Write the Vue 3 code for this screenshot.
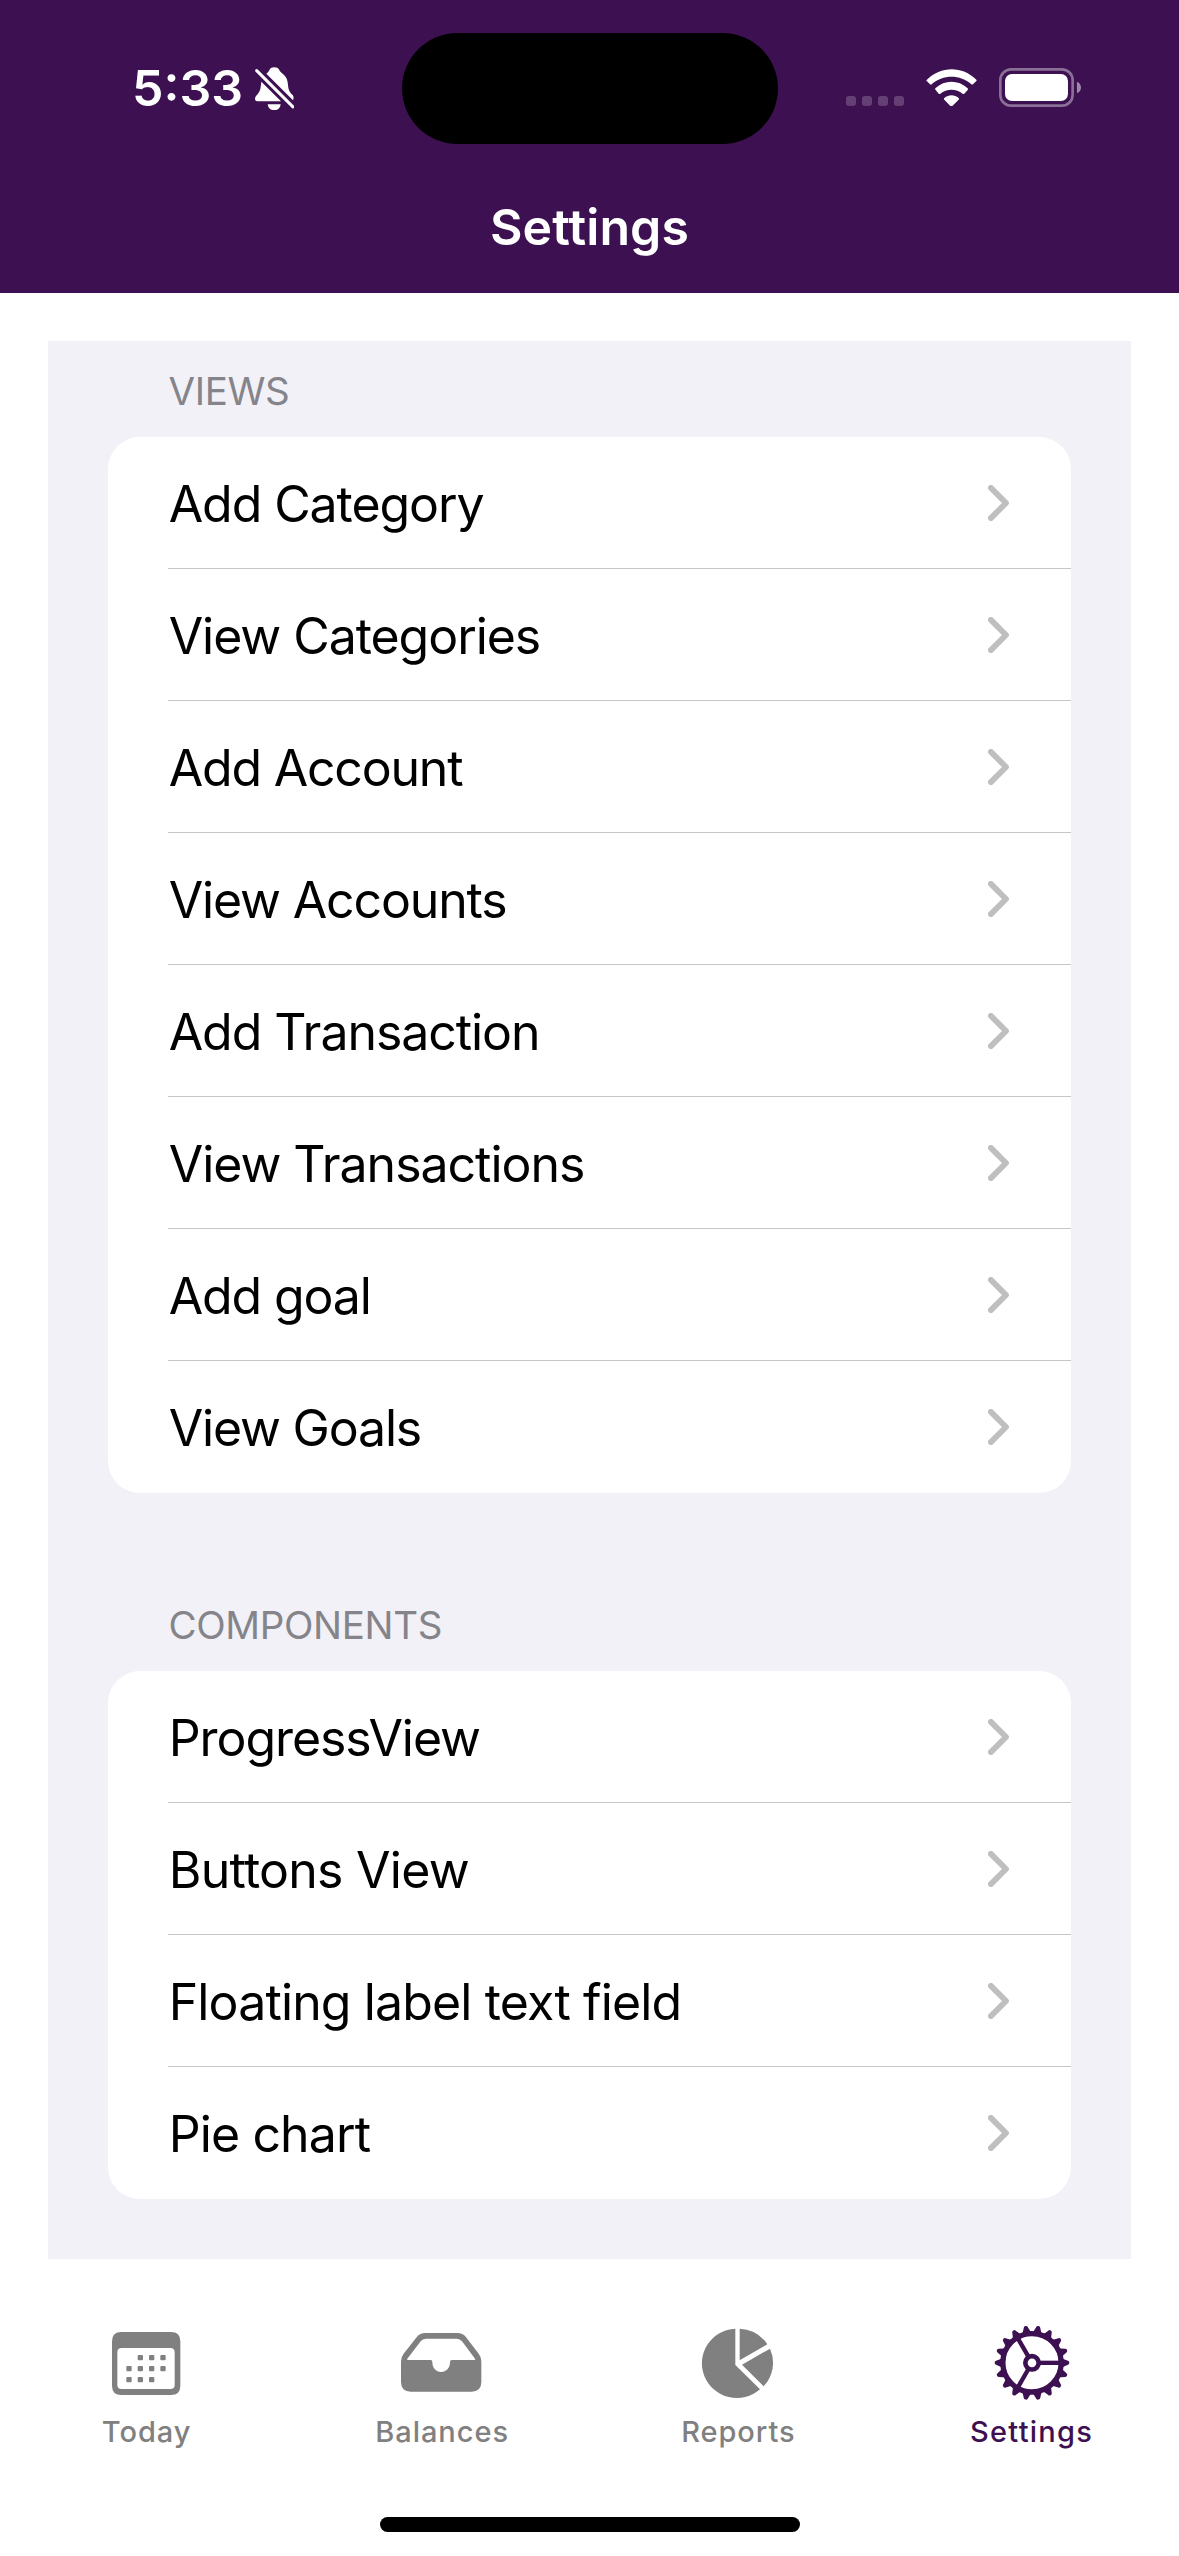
<script setup>
// Each row carries its label and the letter spacing it is set with, in px.
const sections = [
  {
    title: 'VIEWS',
    rows: [
      ['Add Category', -1.08],
      ['View Categories', -1.06],
      ['Add Account', -1.2],
      ['View Accounts', -1.15],
      ['Add Transaction', -1.06],
      ['View Transactions', -1.03],
      ['Add goal', -1.15],
      ['View Goals', -1.18],
    ],
  },
  {
    title: 'COMPONENTS',
    rows: [
      ['ProgressView', -1.06],
      ['Buttons View', -0.74],
      ['Floating label text field', -0.86],
      ['Pie chart', -0.88],
    ],
  },
]

const calendarDots = [
  [182, 173], [216, 173], [250, 173],
  [148, 206], [182, 206], [216, 206], [250, 206],
  [148, 239], [182, 239], [216, 239],
]

const teeth = Array.from({ length: 18 }, (_, i) => i * 20)
</script>

<template>
  <div class="screen">
    <header class="top">
      <div class="status">
        <div class="status-left">
          <span class="time">5:33</span>
          <svg class="bell" viewBox="464 140 119 130">
            <path d="M498 160C503 156 506 153 507 149C510 143 515 141 522 141C529 141 534 143 537 149C538 153 542 156 547 160C559 169 562 181 563 193C564 208 567 214 577 224C581 229 580 236 578 240Z" />
            <path d="M483 184L542 243H471C463 243 462 233 467 227C476 217 480 211 481 200Z" />
            <path d="M502 252H541C540 263 532 270 522 270C511 270 503 263 502 252Z" />
            <path d="M469 151L578 260" class="slash" />
          </svg>
        </div>
        <div class="island"></div>
        <div class="status-right">
          <div class="signal"><i v-for="n in 4" :key="n"></i></div>
          <svg class="wifi" viewBox="318 86 153 113">
            <path d="M320 119Q318 121 321 123L330 132Q333 134 335 132C368 102 421 102 454 132Q457 134 459 132L469 122Q471 120 469 118C427 76 362 76 320 119Z" />
            <path d="M346 144Q344 147 347 149L356 160Q359 162 361 160C380 144 409 144 428 160Q431 162 433 160L443 149Q445 146 443 144C415 118 374 118 346 144Z" />
            <path d="M373 173Q370 176 373 178L391 197Q394 200 397 197L416 178Q418 175 416 173C403 162 386 162 373 173Z" />
          </svg>
          <svg class="battery" viewBox="537 84 247 117">
            <rect x="541" y="88" width="217" height="109" rx="32" class="shell" />
            <rect x="555" y="102" width="189" height="81" rx="21" />
            <path d="M771 125Q783 130 783 142.500Q783 155 771 160Z" class="nub" />
          </svg>
        </div>
      </div>
      <h1>Settings</h1>
    </header>

    <main class="panel">
      <section v-for="s in sections" :key="s.title">
        <h2>{{ s.title }}</h2>
        <ul>
          <li v-for="[label, tracking] in s.rows" :key="label">
            <span :style="{ letterSpacing: tracking + 'px' }">{{ label }}</span>
            <svg class="chevron" viewBox="0 0 21 36"><path d="M2.900 2.900L18 18L2.900 33.100" /></svg>
          </li>
        </ul>
      </section>
    </main>

    <nav class="tabs">
      <a class="tab today">
        <svg viewBox="82 69 240 240">
          <path fill-rule="evenodd" d="M125 96H274Q302 96 302 124V257Q302 285 274 285H125Q97 285 97 257V124Q97 96 125 96ZM126 144Q113 144 113 157V254Q113 267 126 267H272Q285 267 285 254V157Q285 144 272 144Z" />
          <rect v-for="([x, y], i) in calendarDots" :key="i" :x="x - 8" :y="y - 8" width="16" height="16" rx="3" />
        </svg>
        <span>Today</span>
      </a>
      <a class="tab">
        <svg viewBox="156 69 240 240">
          <path fill-rule="evenodd" d="M226 99H322Q338 99 347 110L385 160Q394 171 394 184V246Q394 275 365 275H182Q153 275 153 246V184Q153 171 162 160L201 110Q210 99 226 99ZM228 116Q218 116 212 124L172 176Q169 180 174 180H242Q247 180 247 187C247 204 258 216 273.500 216C289 216 300 204 300 187Q300 180 305 180H373Q378 180 375 176L336 124Q330 116 320 116Z" />
        </svg>
        <span>Balances</span>
      </a>
      <a class="tab reports">
        <svg viewBox="110 69 240 240">
          <path d="M225 86V195L299 268A105 104 0 1 1 225 86Z" />
          <path d="M238 86A105 104 0 0 1 321 133L238 181Z" />
          <path d="M329 146A105 104 0 0 1 310 259L245 194Z" />
        </svg>
        <span>Reports</span>
      </a>
      <a class="tab active">
        <svg viewBox="124.500 69 240 240">
          <g transform="translate(244.500 188.500)">
            <path v-for="a in teeth" :key="a" :transform="`rotate(${a})`" d="M90 -15L96 -11L108 -6Q112 -5 112 0Q112 5 108 6L96 11L90 15Z" />
            <circle r="87.500" class="rim" />
            <circle r="20" class="hub" />
            <path v-for="a in [0, 120, 240]" :key="'s' + a" :transform="`rotate(${a})`" d="M24 0H84" class="spoke" />
          </g>
        </svg>
        <span>Settings</span>
      </a>
    </nav>
    <div class="home"></div>
  </div>
</template>

<style>
body {
  margin: 0;
  background: #fff;
}
</style>

<style scoped>
.screen {
  width: 1179px;
  height: 2556px;
  display: flex;
  flex-direction: column;
  overflow: hidden;
  background: #fff;
  color: #000;
  font-family: Inter, "Liberation Sans", sans-serif;
}
.top {
  height: 293px;
  flex: none;
  background: #3d1051;
  color: #fff;
}
.status {
  height: 178px;
  display: grid;
  grid-template-columns: 401.500px 376px 1fr;
}
.status-left {
  display: flex;
  align-items: flex-start;
  padding-left: 132px;
}
.time {
  width: 122.500px;
  margin-top: 58px;
  font-size: 50px;
  line-height: 60px;
  font-weight: 600;
  white-space: nowrap;
}
.bell {
  width: 39.700px;
  height: 43.300px;
  margin-top: 66.700px;
  fill: #fff;
}
.slash {
  stroke: #fff;
  stroke-width: 9;
  stroke-linecap: round;
}
.island {
  height: 111px;
  margin-top: 33px;
  border-radius: 56px;
  background: #000;
}
.status-right {
  display: flex;
  align-items: flex-start;
  padding-left: 68.500px;
}
.signal {
  display: flex;
  gap: 6px;
  margin-top: 96px;
}
.signal i {
  width: 10px;
  height: 10px;
  border-radius: 3px;
  background: rgba(255, 255, 255, 0.2);
}
.wifi {
  width: 51px;
  height: 37.700px;
  margin: 68.700px 0 0 22px;
  fill: #fff;
}
.battery {
  width: 82.300px;
  height: 39px;
  margin: 68px 0 0 22px;
  fill: #fff;
}
.shell {
  fill: none;
  stroke: rgba(255, 255, 255, 0.4);
  stroke-width: 8;
}
.nub {
  fill: rgba(255, 255, 255, 0.5);
}
h1 {
  margin: 0;
  padding-top: 19px;
  text-align: center;
  font-size: 50px;
  line-height: 60px;
  font-weight: 600;
  letter-spacing: 0.100px;
}
.panel {
  flex: none;
  margin: 48px 48px 0;
  height: 1918px;
  box-sizing: border-box;
  padding: 0 60px;
  background: #f2f1f7;
}
h2 {
  margin: 0;
  padding: 27px 0 23px 60.500px;
  font-size: 38.500px;
  line-height: 46px;
  font-weight: 400;
  letter-spacing: -0.350px;
  color: #85848a;
}
section + section {
  padding-top: 82px;
}
ul {
  margin: 0;
  padding: 0;
  list-style: none;
  background: #fff;
  border-radius: 32px;
}
li {
  height: 132px;
  box-sizing: border-box;
  margin-left: 60px;
  padding-right: 62px;
  display: flex;
  align-items: center;
  justify-content: space-between;
  font-size: 50px;
  line-height: 60px;
}
li span {
  padding: 2px 0 0 0.700px;
}
li:not(:last-child) {
  box-shadow: inset 0 -1px #c6c6c8;
}
.chevron {
  width: 21px;
  height: 36px;
  fill: none;
  stroke: #bfbfbf;
  stroke-width: 5.800;
  stroke-linecap: round;
  stroke-linejoin: round;
}
.tabs {
  flex: none;
  display: grid;
  grid-template-columns: repeat(4, 1fr);
  height: 258px;
}
.tab {
  display: flex;
  flex-direction: column;
  align-items: center;
  padding-top: 64px;
  color: #808080;
}
.tab svg {
  width: 80px;
  height: 80px;
  fill: currentColor;
  overflow: visible;
}
.tab span {
  margin-top: 11px;
  font-size: 29px;
  line-height: 36px;
  font-weight: 500;
  letter-spacing: 0.950px;
}
.today span {
  margin-right: 1.500px;
}
.reports span {
  margin-left: 3px;
}
.tab.active {
  color: #3d1051;
}
.tab.active span {
  letter-spacing: 1.250px;
}
.rim {
  fill: none;
  stroke: currentColor;
  stroke-width: 16;
}
.hub {
  fill: none;
  stroke: currentColor;
  stroke-width: 14;
}
.spoke {
  stroke: currentColor;
  stroke-width: 13;
}
.home {
  flex: none;
  width: 420px;
  height: 15px;
  margin: 0 auto;
  border-radius: 8px;
  background: #000;
}
</style>
